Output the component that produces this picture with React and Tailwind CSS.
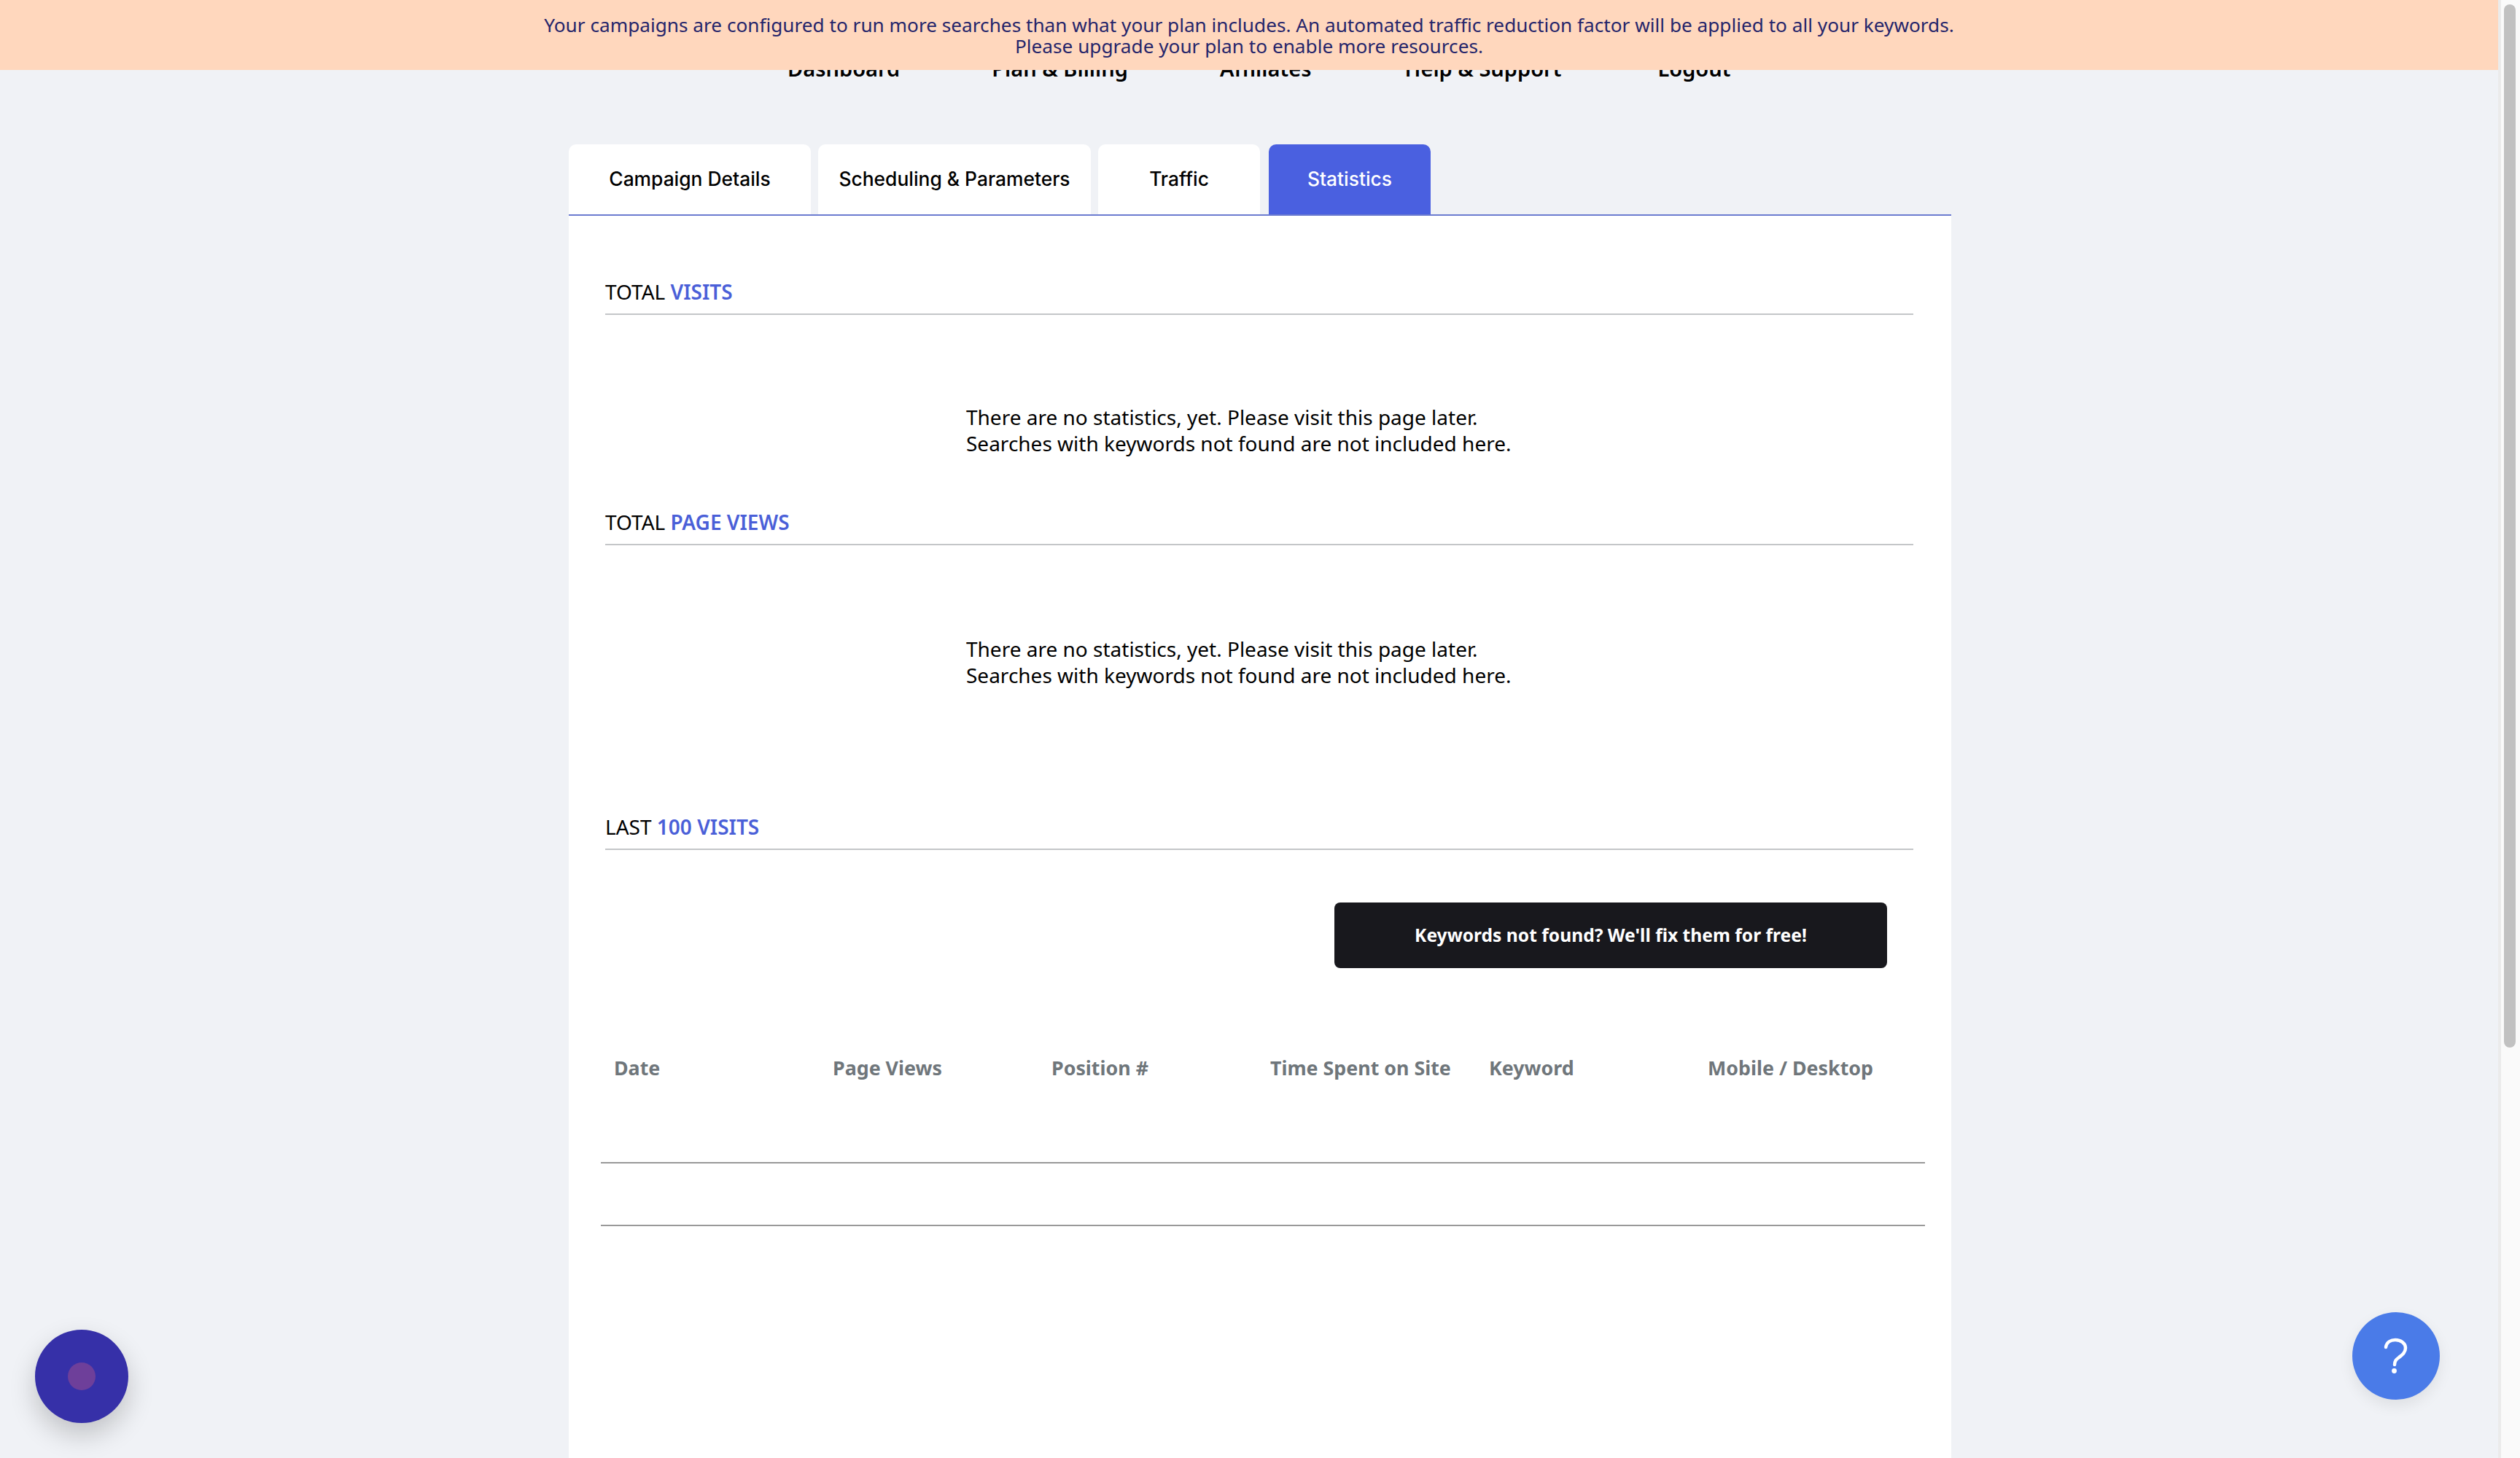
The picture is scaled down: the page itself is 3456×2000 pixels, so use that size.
const sans = "font-['Noto_Sans',sans-serif]";

const tabs = [
  { label: "Campaign Details", w: "w-[332px]" },
  { label: "Scheduling & Parameters", w: "w-[374px]" },
  { label: "Traffic", w: "w-[222px]" },
  { label: "Statistics", w: "w-[222px] ml-[2px]", active: true },
];

const navItems = [
  { label: "Dashboard" },
  { label: "Plan & Billing" },
  { label: "Affiliates" },
  { label: "Help & Support", extra: "ml-[2px]" },
  { label: "Logout", extra: "ml-[6px]" },
];
const columns = ["Date", "Page Views", "Position #", "Time Spent on Site", "Keyword", "Mobile / Desktop"];

function SectionTitle({ first, accent, className }) {
  return (
    <div className={`border-b-2 border-[#c4c6c8] pb-[12px] text-[28px] leading-[36px] text-black ${className}`}>
      {first} <span className="font-semibold text-[#4a5fd8]">{accent}</span>
    </div>
  );
}

function NoStats({ className }) {
  return (
    <div className={`ml-[495px] text-[28px] leading-[35.5px] text-black ${className}`}>
      <div>There are no statistics, yet. Please visit this page later.</div>
      <div>Searches with keywords not found are not included here.</div>
    </div>
  );
}

export default function App() {
  return (
    <div className={`relative flex h-[2000px] overflow-hidden bg-[#f0f2f6] ${sans}`}>
      {/* PAGE */}
      <div className="min-w-0 flex-1 pl-[780px]">
        <div className="w-[1896px]">
          <nav className="flex h-[198px] gap-[126px] pl-[300px] pt-[74px] text-[29px] font-semibold leading-[40px] text-black">
            {navItems.map((item) => (
              <span key={item.label} className={item.extra}>{item.label}</span>
            ))}
          </nav>

          {/* TABS */}
          <div className="flex h-[98px] gap-[10px] border-b-2 border-[#6b7bd0]">
            {tabs.map((t) => (
              <div
                key={t.label}
                className={`flex h-[96px] items-center justify-center rounded-t-[10px] font-['Inter',sans-serif] text-[26.4px] font-medium ${t.w} ${
                  t.active ? "bg-[#4a60e0] text-white" : "bg-white text-black"
                }`}
              >
                {t.label}
              </div>
            ))}
          </div>

          {/* PANEL */}
          <div className="h-[1704px] bg-white pl-[50px] pr-[52px]">
            <SectionTitle first="TOTAL" accent="VISITS" className="pt-[86px]" />
            <NoStats className="mt-[123px]" />
            <SectionTitle first="TOTAL" accent="PAGE VIEWS" className="mt-[72px]" />
            <NoStats className="mt-[125px]" />
            <SectionTitle first="LAST" accent="100 VISITS" className="mt-[172px]" />

            <div className="mt-[72px] flex justify-end pr-[36px]">
              <button className="flex h-[90px] w-[758px] items-center justify-center rounded-[8px] bg-[#18181d] text-[24.6px] font-bold text-white">
                Keywords not found? We'll fix them for free!
              </button>
            </div>

            <div className="-ml-[6px] -mr-[16px] mt-[117px]">
              <div className="grid h-[151px] grid-cols-[repeat(5,300px)_1fr] border-b-2 border-[#999999] pl-[18px] text-[26.8px] font-bold leading-[40px] text-[#6f767b]">
                {columns.map((c) => (
                  <div key={c} className="whitespace-nowrap">{c}</div>
                ))}
              </div>
              <div className="h-[86px] border-b-2 border-[#999999]" />
            </div>
          </div>
        </div>
      </div>

      {/* SCROLLBAR */}
      <div className="h-full w-[30px] shrink-0 border-l-4 border-[#ebebeb] bg-[#fafafa] pl-[4px] pt-[6px]">
        <div className="h-[1431px] w-[16px] rounded-full bg-[#c1c1c1]" />
      </div>

      {/* BANNER */}
      <div className="absolute left-0 top-0 flex h-[96px] w-[3426px] flex-col items-center bg-[#ffd7bd] pt-[20px] text-[26.2px] leading-[28.5px] text-[#25256b]">
        <div>Your campaigns are configured to run more searches than what your plan includes. An automated traffic reduction factor will be applied to all your keywords.</div>
        <div>Please upgrade your plan to enable more resources.</div>
      </div>

      {/* CHAT BUBBLE */}
      <div className="absolute left-[48px] top-[1824px] flex h-[128px] w-[128px] items-center justify-center rounded-full bg-[#3630a8] shadow-[0_16px_36px_rgba(0,0,0,0.2)]">
        <div className="h-[38px] w-[38px] rounded-full bg-[#6e3f9a]" />
      </div>

      {/* HELP */}
      <div className="absolute left-[3226px] top-[1800px] flex h-[120px] w-[120px] items-center justify-center rounded-full bg-[#4a7be8] shadow-[0_8px_20px_rgba(0,0,0,0.08)]">
        <svg width="34" height="50" viewBox="0 0 34 50" fill="none" stroke="white" strokeWidth="4.5" strokeLinecap="round">
          <path d="M3 13 C4 6 10 3 16 3 C24 3 30 8 30 14 C30 20 26 23 21 27 C17 30 15 32 15 37" />
          <circle cx="14.5" cy="45.5" r="3.4" fill="white" stroke="none" />
        </svg>
      </div>
    </div>
  );
}
